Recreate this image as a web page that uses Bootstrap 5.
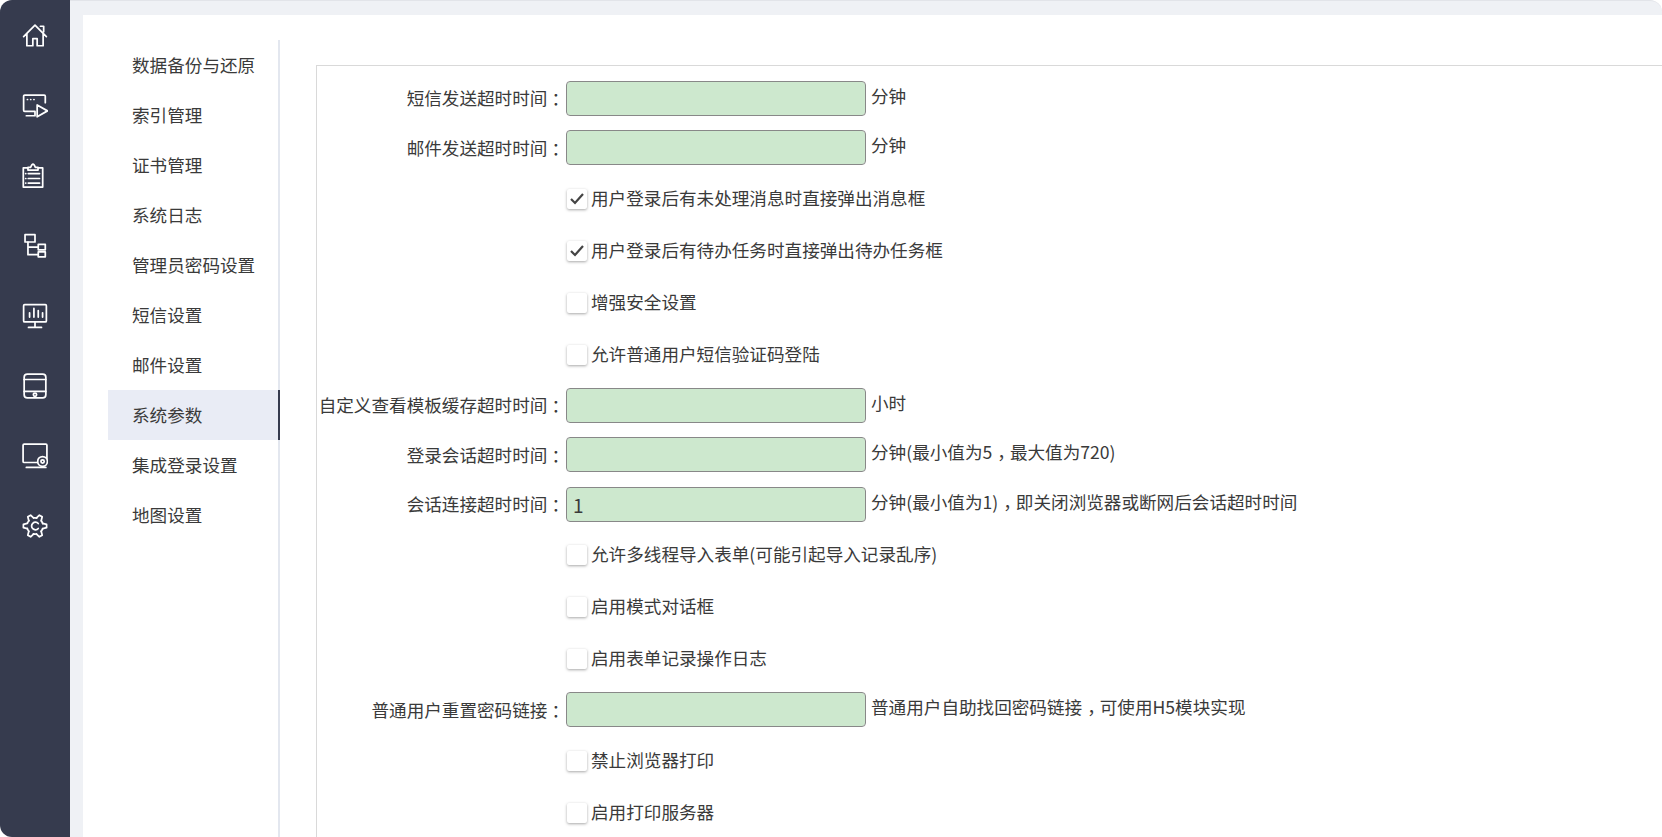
<!DOCTYPE html>
<html lang="zh-CN">

<head>
    <meta charset="UTF-8">
    <meta name="viewport" content="width=device-width, initial-scale=1.0">
    <title>系统参数</title>
    <link href="https://cdn.jsdelivr.net/npm/bootstrap@5.3.0/dist/css/bootstrap.min.css" rel="stylesheet">
    <style>
        html, body {
            height: 100%;
        }

        body {
            overflow: hidden;
            background-color: #fff;
            color: #3a3a3a;
            font-family: "Noto Sans CJK SC", "Liberation Sans", sans-serif;
            font-size: 17.6px;
        }

        /* 左侧图标栏 */
        .side-rail {
            width: 70px;
            padding-top: 1px;
            background-color: #363b4e;
            border-radius: 12px 0 0 12px;
        }

        .rail-item {
            height: 70px;
        }

        .rail-item svg {
            width: 26px;
            height: 26px;
            fill: none;
            stroke: #fff;
            stroke-width: 1.6;
            stroke-linejoin: round;
            stroke-linecap: round;
        }

        .page-area {
            min-width: 0;
            border-top: 1px solid #e2e4e9;
            border-top-right-radius: 12px;
            background-color: #eff1f5;
            padding: 14px 0 0 13px;
        }

        .page-sheet {
            background-color: #fff;
            padding: 25px 0 0 25px;
        }

        /* 二级菜单 */
        .sub-menu {
            width: 172px;
            border-right: 2px solid #e3e7ef;
        }

        .sub-link {
            height: 50px;
            padding-left: 24px;
            margin-right: -2px;
            color: #3a3a3a;
            text-decoration: none;
        }

        .sub-link.current {
            background-color: #e9ecf5;
            border-right: 2px solid #363b4e;
        }

        .form-zone {
            padding: 25px 0 0 36px;
        }

        .form-panel {
            border: 1px solid #d9d9d9;
            border-right: 0;
            border-bottom: 0;
            padding-top: 14.5px;
        }

        .field-line {
            height: 35px;
            margin-bottom: 14.5px;
        }

        .check-line {
            height: 38px;
            margin-bottom: 14px;
            padding-left: 250px;
        }

        .field-label {
            width: 249px;
            margin-top: 1px;
            text-align: right;
            white-space: nowrap;
        }

        /* 全角标点在参考图里居中 */
        .colon-mark {
            padding-left: 4px;
            letter-spacing: -3px;
        }

        .comma-mark {
            padding-left: 5px;
            letter-spacing: -5px;
        }

        .form-control.green-input {
            width: 300px;
            height: 35px;
            padding: 0 6px;
            background-color: #cde8ce;
            border: 1px solid #888;
            border-radius: 4px;
            color: #3a3a3a;
            font-size: 19px;
        }

        .field-hint {
            margin-left: 5px;
            margin-top: -4px;
        }

        .check-text {
            margin-top: -1px;
        }

        .form-check-input.soft-check {
            width: 20px;
            height: 20px;
            margin: 0 4px 0 0;
            border: 0;
            border-radius: 2px;
            background-color: #fff;
            box-shadow: 0 1px 3px rgba(0, 0, 0, 0.35);
        }

        .form-check-input.soft-check:checked {
            background-color: #fff;
            background-image: url("data:image/svg+xml,%3csvg xmlns='http://www.w3.org/2000/svg' viewBox='0 0 20 20'%3e%3cpath fill='none' stroke='%23444' stroke-width='2.2' d='M4 10l4 4 8-9'/%3e%3c/svg%3e");
        }

        .form-check-input.soft-check:focus {
            box-shadow: 0 1px 3px rgba(0, 0, 0, 0.35);
        }
    </style>
</head>

<body class="d-flex">
    <aside class="side-rail flex-shrink-0">
        <div class="rail-item d-flex align-items-center justify-content-center">
            <svg viewBox="0 0 24 24"><path d="M1.500 12.500 12 2l10.500 10.500M4.500 10v11h5.500v-6.500h4V21h5.500V10M17 3h3v5"/></svg>
        </div>
        <div class="rail-item d-flex align-items-center justify-content-center">
            <svg viewBox="0 0 24 24"><path d="M21.500 9V3a1 1 0 0 0-1-1H2.500a1 1 0 0 0-1 1v13a1 1 0 0 0 1 1H12v4H4M14 11v11l9.500-5.500zM5 6h.1M8 6h.1M11 6h.1"/></svg>
        </div>
        <div class="rail-item d-flex align-items-center justify-content-center">
            <svg viewBox="0 0 24 24"><path d="M5.500 4.600H1.200v17.600h17.900V4.600h-4.300M5.500 6.500V4H8Q9 1 10.150 1t2.150 3h2.500v2.500zM5.800 9.800h10.400M5.800 14.300h10.400M5.800 18.500h10.400M3.400 9.800h.1M3.400 14.300h.1M3.400 18.500h.1"/></svg>
        </div>
        <div class="rail-item d-flex align-items-center justify-content-center">
            <svg viewBox="0 0 24 24"><rect x="2.800" y="1.500" width="9.200" height="6.800"/><path d="M5.500 8.300V20H15M5.500 13H15"/><rect x="15" y="10.500" width="6.500" height="5"/><rect x="15" y="17.500" width="6.500" height="4.500"/></svg>
        </div>
        <div class="rail-item d-flex align-items-center justify-content-center">
            <svg viewBox="0 0 24 24"><rect x="1.500" y="1.500" width="21" height="16" rx="1"/><path d="M7 13V9M11 13V5M15 13V7M19 13V9M12 17.500V22M6 22.500h12"/></svg>
        </div>
        <div class="rail-item d-flex align-items-center justify-content-center">
            <svg viewBox="0 0 24 24"><rect x="2" y="1" width="20" height="22" rx="3"/><path d="M2 6h20M2 17h20"/><circle cx="12" cy="20" r="1.500"/></svg>
        </div>
        <div class="rail-item d-flex align-items-center justify-content-center">
            <svg viewBox="0 0 24 24"><path d="M14 18H2a1 1 0 0 1-1-1V2a1 1 0 0 1 1-1h20a1 1 0 0 1 1 1v12M4 22.500h18"/><circle cx="19" cy="17" r="4.500"/><circle cx="19" cy="17" r="1.500"/></svg>
        </div>
        <div class="rail-item d-flex align-items-center justify-content-center">
            <svg viewBox="0 0 24 24">
                <circle cx="12" cy="12" r="7.500" stroke-dasharray="2.850 5" stroke-dashoffset="-2.500"/>
                <path d="M9.500 4.900 10.500 1.300h3l1 3.600" transform="rotate(30 12 12)"/>
                <path d="M9.500 4.900 10.500 1.300h3l1 3.600" transform="rotate(90 12 12)"/>
                <path d="M9.500 4.900 10.500 1.300h3l1 3.600" transform="rotate(150 12 12)"/>
                <path d="M9.500 4.900 10.500 1.300h3l1 3.600" transform="rotate(210 12 12)"/>
                <path d="M9.500 4.900 10.500 1.300h3l1 3.600" transform="rotate(270 12 12)"/>
                <path d="M9.500 4.900 10.500 1.300h3l1 3.600" transform="rotate(330 12 12)"/>
                <path d="M15 9.700a3.500 3.500 0 1 0 0 4.600"/>
            </svg>
        </div>
    </aside>

    <div class="page-area flex-grow-1 d-flex flex-column">
        <div class="page-sheet flex-grow-1 d-flex">
            <nav class="sub-menu flex-shrink-0">
                <a class="sub-link d-flex align-items-center" href="#">数据备份与还原</a>
                <a class="sub-link d-flex align-items-center" href="#">索引管理</a>
                <a class="sub-link d-flex align-items-center" href="#">证书管理</a>
                <a class="sub-link d-flex align-items-center" href="#">系统日志</a>
                <a class="sub-link d-flex align-items-center" href="#">管理员密码设置</a>
                <a class="sub-link d-flex align-items-center" href="#">短信设置</a>
                <a class="sub-link d-flex align-items-center" href="#">邮件设置</a>
                <a class="sub-link current d-flex align-items-center" href="#">系统参数</a>
                <a class="sub-link d-flex align-items-center" href="#">集成登录设置</a>
                <a class="sub-link d-flex align-items-center" href="#">地图设置</a>
            </nav>

            <div class="form-zone flex-grow-1 d-flex flex-column">
                <form class="form-panel flex-grow-1">
                    <div class="field-line d-flex align-items-center">
                        <label class="field-label">短信发送超时时间<span class="colon-mark">：</span></label>
                        <input type="text" class="form-control green-input">
                        <span class="field-hint">分钟</span>
                    </div>
                    <div class="field-line d-flex align-items-center">
                        <label class="field-label">邮件发送超时时间<span class="colon-mark">：</span></label>
                        <input type="text" class="form-control green-input">
                        <span class="field-hint">分钟</span>
                    </div>
                    <div class="check-line d-flex align-items-center">
                        <input type="checkbox" class="form-check-input soft-check" checked>
                        <span class="check-text">用户登录后有未处理消息时直接弹出消息框</span>
                    </div>
                    <div class="check-line d-flex align-items-center">
                        <input type="checkbox" class="form-check-input soft-check" checked>
                        <span class="check-text">用户登录后有待办任务时直接弹出待办任务框</span>
                    </div>
                    <div class="check-line d-flex align-items-center">
                        <input type="checkbox" class="form-check-input soft-check">
                        <span class="check-text">增强安全设置</span>
                    </div>
                    <div class="check-line d-flex align-items-center">
                        <input type="checkbox" class="form-check-input soft-check">
                        <span class="check-text">允许普通用户短信验证码登陆</span>
                    </div>
                    <div class="field-line d-flex align-items-center">
                        <label class="field-label">自定义查看模板缓存超时时间<span class="colon-mark">：</span></label>
                        <input type="text" class="form-control green-input">
                        <span class="field-hint">小时</span>
                    </div>
                    <div class="field-line d-flex align-items-center">
                        <label class="field-label">登录会话超时时间<span class="colon-mark">：</span></label>
                        <input type="text" class="form-control green-input">
                        <span class="field-hint">分钟(最小值为5<span class="comma-mark">，</span>最大值为720)</span>
                    </div>
                    <div class="field-line d-flex align-items-center">
                        <label class="field-label">会话连接超时时间<span class="colon-mark">：</span></label>
                        <input type="text" class="form-control green-input" value="1">
                        <span class="field-hint">分钟(最小值为1)<span class="comma-mark">，</span>即关闭浏览器或断网后会话超时时间</span>
                    </div>
                    <div class="check-line d-flex align-items-center">
                        <input type="checkbox" class="form-check-input soft-check">
                        <span class="check-text">允许多线程导入表单(可能引起导入记录乱序)</span>
                    </div>
                    <div class="check-line d-flex align-items-center">
                        <input type="checkbox" class="form-check-input soft-check">
                        <span class="check-text">启用模式对话框</span>
                    </div>
                    <div class="check-line d-flex align-items-center">
                        <input type="checkbox" class="form-check-input soft-check">
                        <span class="check-text">启用表单记录操作日志</span>
                    </div>
                    <div class="field-line d-flex align-items-center">
                        <label class="field-label">普通用户重置密码链接<span class="colon-mark">：</span></label>
                        <input type="text" class="form-control green-input">
                        <span class="field-hint">普通用户自助找回密码链接<span class="comma-mark">，</span>可使用H5模块实现</span>
                    </div>
                    <div class="check-line d-flex align-items-center">
                        <input type="checkbox" class="form-check-input soft-check">
                        <span class="check-text">禁止浏览器打印</span>
                    </div>
                    <div class="check-line d-flex align-items-center">
                        <input type="checkbox" class="form-check-input soft-check">
                        <span class="check-text">启用打印服务器</span>
                    </div>
                </form>
            </div>
        </div>
    </div>

    <script src="https://cdn.jsdelivr.net/npm/bootstrap@5.3.0/dist/js/bootstrap.bundle.min.js"></script>
</body>

</html>
